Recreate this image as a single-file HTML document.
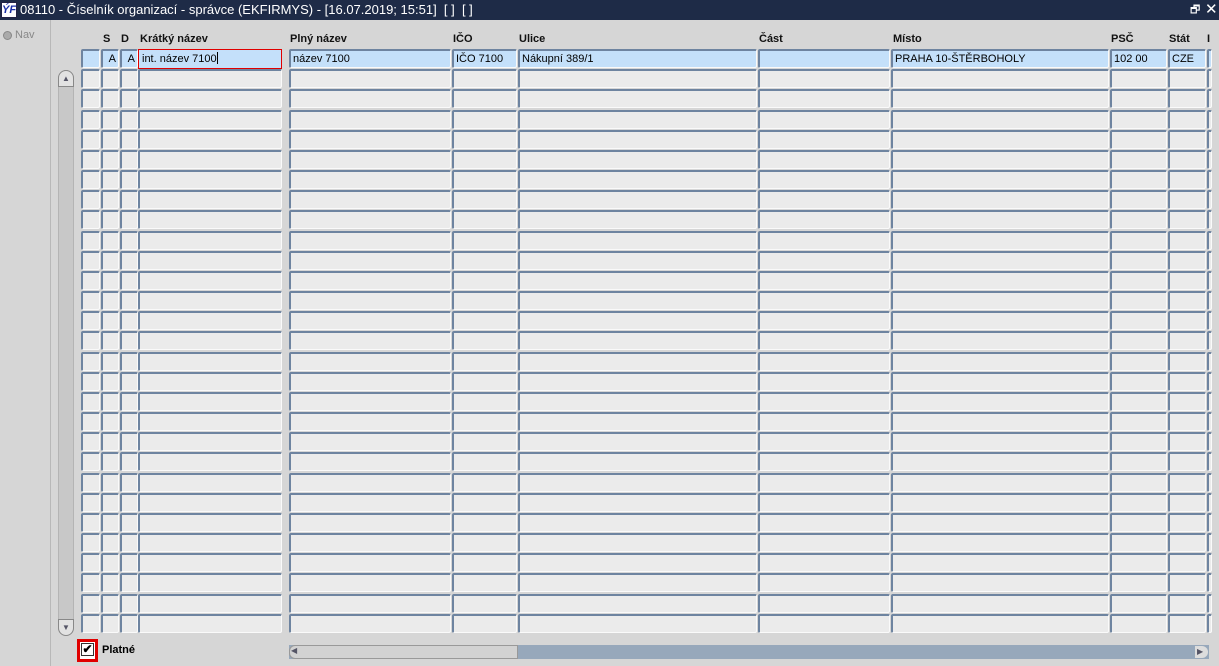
<!DOCTYPE html>
<html><head><meta charset="utf-8"><style>
*{margin:0;padding:0;box-sizing:border-box}
body{width:1219px;height:666px;overflow:hidden;background:#d6d6d6;font-family:"Liberation Sans",Arial,sans-serif;font-size:11px;position:relative}
#tb{position:absolute;left:0;top:0;width:1219px;height:20px;background:#1e2b47;color:#fff;font-size:13px;line-height:20px}
#logo{position:absolute;left:1px;top:2px;width:16px;height:16px;background:#fff;border:1px solid #224;color:#1a2fa8;font:bold italic 11px "Liberation Sans";line-height:14px;text-align:center}
#left{position:absolute;left:0;top:20px;width:51px;height:646px;background:#d6d6d6;border-right:1px solid #b8b8b8}
.h{position:absolute;top:33px;font-weight:bold;color:#111;font-size:11px}
.c{position:absolute;height:19px;background:#ebebeb;border-top:2px solid #6e84a0;border-left:2px solid #6e84a0;border-bottom:1px solid #fafafa;border-right:1px solid #fafafa;border-radius:2px;font-size:11px;line-height:17px;padding-left:2px;white-space:nowrap;overflow:hidden;color:#000}
.b{background:#c4e0fa}
</style></head><body>
<div id="tb"><div id="logo">ÝF</div><span style="position:absolute;left:20px">08110 - Číselník organizací - správce (EKFIRMYS) - [16.07.2019; 15:51]&nbsp; [ ]&nbsp; [ ]</span>
<span style="position:absolute;left:1190px;top:0;font-size:11px">🗗</span><span style="position:absolute;left:1205px;top:0;font-size:15px">✕</span></div>
<div id="left"><div style="position:absolute;left:3px;top:11px;width:9px;height:9px;border-radius:50%;background:#aaa;border:1px solid #888"></div><span style="position:absolute;left:15px;top:9px;color:#888;font-size:11px">Nav</span></div>
<div class="h" style="left:103px">S</div><div class="h" style="left:121px">D</div><div class="h" style="left:140px">Krátký název</div><div class="h" style="left:290px">Plný název</div><div class="h" style="left:453px">IČO</div><div class="h" style="left:519px">Ulice</div><div class="h" style="left:759px">Část</div><div class="h" style="left:893px">Místo</div><div class="h" style="left:1111px">PSČ</div><div class="h" style="left:1169px">Stát</div><div class="h" style="left:1207px">I</div>
<div id="g"></div>
<div style="position:absolute;left:138px;top:49px;width:144px;height:20px;border:1px solid #e00000;background:#c4e0fa;padding-left:3px;line-height:18px;font-size:11px">int. název 7100<span style="display:inline-block;width:1px;height:12px;background:#000;vertical-align:-2px"></span></div>
<div style="position:absolute;left:58px;top:70px;width:16px;height:566px;background:#c8c8c8;border-radius:8px;border:1px solid #b4b4b4"></div>
<div style="position:absolute;left:58px;top:70px;width:16px;height:17px;background:#e2e2e2;border-radius:8px 8px 0 0;border:1px solid #888;color:#556;font-size:8px;text-align:center;line-height:15px">▲</div>
<div style="position:absolute;left:58px;top:619px;width:16px;height:17px;background:#e2e2e2;border-radius:0 0 8px 8px;border:1px solid #888;color:#556;font-size:8px;text-align:center;line-height:15px">▼</div>
<div style="position:absolute;left:77px;top:639px;width:21px;height:23px;border:3px solid #e00000;background:#fff"></div>
<div style="position:absolute;left:81px;top:643px;width:13px;height:13px;border:1px solid #333;background:#fff;font-size:12px;line-height:11px;text-align:center;font-weight:bold">✔</div>
<div style="position:absolute;left:102px;top:644px;font-weight:bold;font-size:11px">Platné</div>
<div style="position:absolute;left:289px;top:645px;width:920px;height:14px;background:#97a8bb"></div>
<div style="position:absolute;left:289px;top:645px;width:229px;height:14px;background:#d2d2d2;border:1px solid #999;border-radius:6px 0 0 6px"></div>
<div style="position:absolute;left:291px;top:646px;font-size:8px;color:#556">◀</div>
<div style="position:absolute;left:1195px;top:646px;width:13px;height:12px;background:#ddd;border-radius:0 6px 6px 0;font-size:8px;color:#556;line-height:12px;padding-left:2px">▶</div>
<script>
var cols=[[81,19],[101,18],[120,18],[138,144],[289,162],[452,65],[518,239],[758,132],[891,218],[1110,57],[1168,38],[1207,5]];
var v=["","A","A","","název 7100","IČO 7100","Nákupní 389/1","","PRAHA 10-ŠTĚRBOHOLY","102 00","CZE",""];
var h="";
for(var r=0;r<29;r++){var t=Math.round(49+r*20.17);
for(var i=0;i<cols.length;i++){if(r==0&&i==3)continue;var c=cols[i];var st="left:"+c[0]+"px;top:"+t+"px;width:"+c[1]+"px;";
var cls="c";var txt="";if(r==0){cls+=" b";txt=v[i];if(i==1||i==2)st+="text-align:right;padding-right:2px;"}
h+='<div class="'+cls+'" style="'+st+'">'+txt+'</div>';}}
document.getElementById("g").innerHTML=h;
</script>
</body></html>
